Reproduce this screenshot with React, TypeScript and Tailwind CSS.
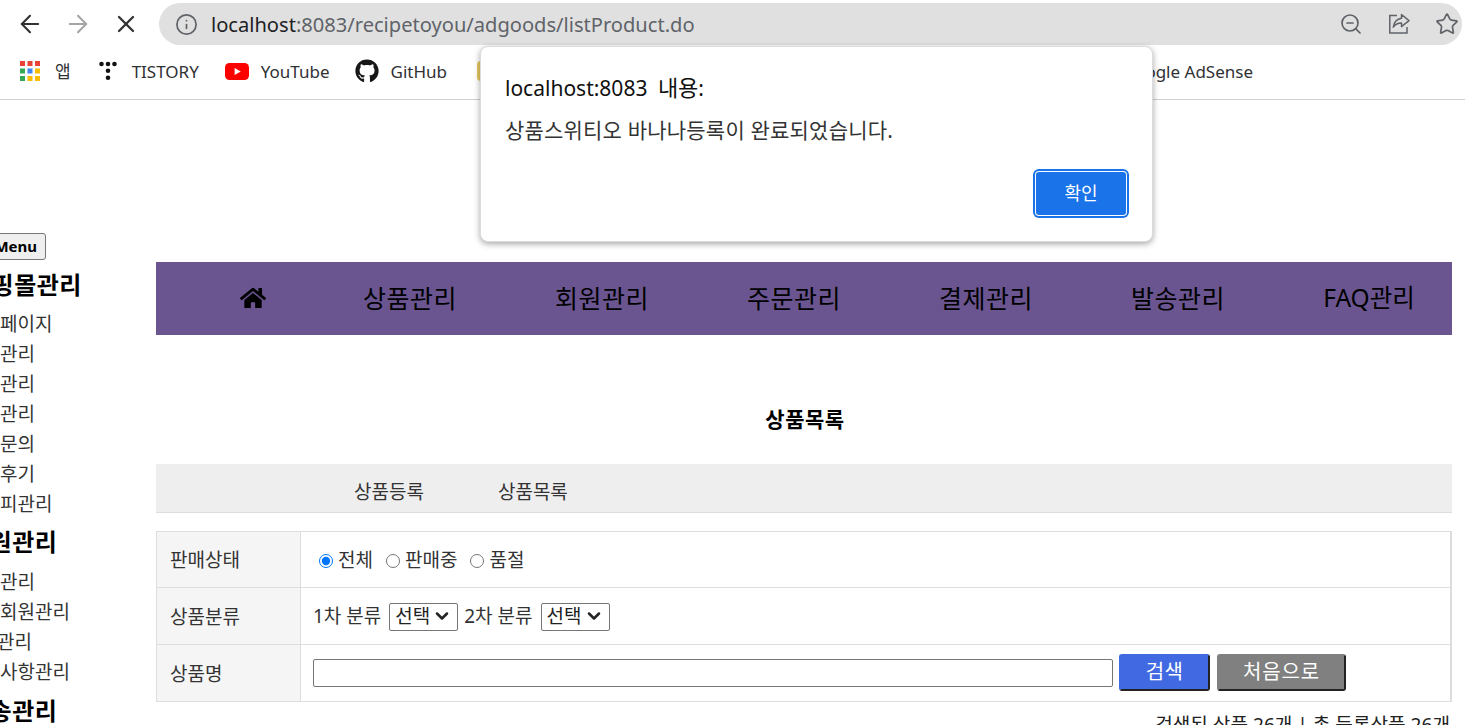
import React from "react";
import { ArrowLeft, ArrowRight, X, Info, ZoomOut, Star, ChevronDown } from "lucide-react";
import { FaHome, FaGithub } from "react-icons/fa";

const kr = "font-['Noto_Sans','Noto_Sans_CJK_KR',sans-serif]";

function AppsIcon() {
  const c = ["#ea4335", "#ea4335", "#ea4335", "#34a853", "#4285f4", "#fbbc04", "#34a853", "#fbbc04", "#fbbc04"];
  return (
    <svg width="20" height="20" viewBox="0 0 20 20">
      {c.map((f, i) => (
        <rect key={i} x={(i % 3) * 7.5} y={Math.floor(i / 3) * 7.5} width="5" height="5" fill={f} />
      ))}
    </svg>
  );
}

function TistoryIcon() {
  return (
    <svg width="18" height="20" viewBox="0 0 18 20" fill="#111">
      <circle cx="2.5" cy="3" r="2.3" /><circle cx="9" cy="3" r="2.3" /><circle cx="15.5" cy="3" r="2.3" />
      <circle cx="9" cy="9.8" r="2.3" /><circle cx="9" cy="16.8" r="2.3" />
    </svg>
  );
}

function YoutubeIcon() {
  return (
    <svg width="24" height="17" viewBox="0 0 24 17">
      <rect width="24" height="17" rx="4.5" fill="#f00" />
      <path d="M9.6 4.9 15.8 8.5 9.6 12.1Z" fill="#fff" />
    </svg>
  );
}

function ShareIcon() {
  return (
    <svg width="24" height="24" viewBox="0 0 24 24" fill="none" stroke="#5f6368" strokeWidth="1.5">
      <path d="M10 3.5H2.8V21H20v-6" />
      <path d="M14.5 2.5 22 8.6l-7.5 6v-3.5c-3.5 0-6 1-8.2 4 .6-4.5 3.2-8 8.2-8.8Z" strokeLinejoin="round" />
    </svg>
  );
}

function Bookmark({ icon, label, cls }: { icon: React.ReactNode; label: string; cls: string }) {
  return (
    <div className={`flex items-center ${cls}`}>
      {icon}
      <span className="text-[17px] leading-none text-[#303134]">{label}</span>
    </div>
  );
}

function BrowserBar() {
  return (
    <header className={`h-[100px] border-b border-[#cfcfcf] ${kr}`}>
      <div className="flex h-[48px] items-center">
        <ArrowLeft size={28} strokeWidth={1.8} className="ml-[16px] text-[#333]" />
        <ArrowRight size={28} strokeWidth={1.8} className="ml-[20px] text-[#a5a5a5]" />
        <X size={28} strokeWidth={2} className="ml-[20px] text-[#333]" />
        <div className="ml-[19px] mr-[3px] flex h-[42px] flex-1 items-center rounded-full bg-[#e0e0e0] pl-[16px] pr-[3px]">
          <Info size={23} strokeWidth={1.8} className="text-[#5f6368]" />
          <span className="ml-[13px] pt-[2px] text-[20.1px] leading-none text-[#5f6368]">
            <span className="text-[#202124]">localhost</span>:8083/recipetoyou/adgoods/listProduct.do
          </span>
          <ZoomOut size={24} strokeWidth={1.7} className="ml-auto text-[#5f6368]" />
          <span className="ml-[24px]"><ShareIcon /></span>
          <Star size={24} strokeWidth={1.7} className="ml-[24px] text-[#5f6368]" />
        </div>
      </div>
      <div className="flex h-[46px] items-center pl-[20px]">
        <Bookmark icon={<AppsIcon />} label="앱" cls="gap-[15px]" />
        <Bookmark icon={<TistoryIcon />} label="TISTORY" cls="ml-[28px] gap-[15px]" />
        <Bookmark icon={<YoutubeIcon />} label="YouTube" cls="ml-[26px] gap-[12px]" />
        <Bookmark icon={<FaGithub size={24} className="text-[#181717]" />} label="GitHub" cls="ml-[25px] gap-[12px]" />
        <div className="ml-[30px] h-[20px] w-[16px] rounded-sm bg-[#e8c95f]" />
        <span className="ml-auto mr-[212px] text-[17px] leading-none text-[#303134]">Google AdSense</span>
      </div>
    </header>
  );
}

function SideGroup({ title, items, offset }: { title: string; items: [string, string][]; offset: string }) {
  return (
    <div>
      <h2 className={`h-[43px] whitespace-nowrap text-[24px] font-bold leading-[38px] tracking-[0.5px] text-black ${offset}`}>{title}</h2>
      <ul>
        {items.map(([t, c]) => (
          <li key={t} className={`h-[30px] whitespace-nowrap text-[19px] leading-[30px] text-[#333] ${c}`}>{t}</li>
        ))}
      </ul>
    </div>
  );
}

function Sidebar() {
  return (
    <aside className="w-[156px] shrink-0 pt-[133px]">
      <button className="-ml-[10px] block h-[27px] w-[56px] rounded-[3px] border border-[#767676] bg-[#efefef] pr-[8px] text-right text-[15px] font-bold text-black">
        Menu
      </button>
      <div className="mt-[6px]">
        <SideGroup
          title="쇼핑몰관리"
          offset="-ml-[31px]"
          items={[
            ["마이페이지", "-ml-[35px]"],
            ["상품관리", "-ml-[35px]"],
            ["주문관리", "-ml-[35px]"],
            ["배송관리", "-ml-[35px]"],
            ["상품문의", "-ml-[35px]"],
            ["상품후기", "-ml-[35px]"],
            ["배송피관리", "-ml-[35px]"],
          ]}
        />
      </div>
      <div className="mt-[4px]">
        <SideGroup
          title="회원관리"
          offset="-ml-[33px] mb-[1px]"
          items={[
            ["회원관리", "-ml-[35px]"],
            ["휴면회원관리", "-ml-[35px]"],
            ["등급관리", "-ml-[38px]"],
            ["공지사항관리", "-ml-[35px]"],
          ]}
        />
      </div>
      <div className="mt-[5px]">
        <SideGroup title="배송관리" offset="-ml-[33px]" items={[]} />
      </div>
    </aside>
  );
}

function TopNav() {
  const items = ["상품관리", "회원관리", "주문관리", "결제관리", "발송관리"];
  return (
    <nav className="flex h-[73px] items-center overflow-hidden bg-[#6a5590] pb-[1px] pl-[84px] text-black">
      <div className="mr-[48px] w-[26px] shrink-0"><FaHome size={26} /></div>
      {items.map((t) => (
        <div key={t} className="w-[192px] shrink-0 whitespace-nowrap text-center text-[25px] leading-none tracking-[0.5px]">{t}</div>
      ))}
      <div className="-ml-[1px] w-[192px] shrink-0 whitespace-nowrap text-center text-[24.5px] leading-none">FAQ관리</div>
    </nav>
  );
}

function Row({ label, children, cls }: { label: string; children: React.ReactNode; cls: string }) {
  return (
    <div className={`flex ${cls}`}>
      <div className="flex w-[144px] shrink-0 items-center border-r border-[#ddd] bg-[#f5f5f5] pl-[13px] pt-[2px] text-[19px] text-[#333]">{label}</div>
      <div className="flex flex-1 items-center pl-[12px] text-[19px] text-[#333]">{children}</div>
    </div>
  );
}

function CatSelect() {
  return (
    <div className="relative h-[28px] w-[69px]">
      <select className="h-full w-full appearance-none rounded-[2px] border border-[#767676] bg-white pl-[5px] text-[19px] leading-none text-[#222]">
        <option>선택</option>
      </select>
      <ChevronDown size={20} strokeWidth={3} className="pointer-events-none absolute right-[6px] top-[4px] text-[#222]" />
    </div>
  );
}

function Radio({ label, checked }: { label: string; checked?: boolean }) {
  return (
    <label className="flex items-center">
      <input type="radio" name="status" defaultChecked={checked} className="ml-[6px] mr-[5px] h-[14px] w-[14px]" />
      {label}
    </label>
  );
}

function Content() {
  return (
    <main className="w-[1296px] shrink-0">
      <div className="h-[162px]" />
      <TopNav />
      <h1 className="mt-[65px] h-[40px] pl-[2px] text-center text-[21px] font-bold leading-[38px] tracking-[0.5px] text-black">상품목록</h1>
      <div className="mt-[24px] flex h-[49px] items-center border-b border-[#ddd] bg-[#eee] pl-[198px] pt-[8px] text-[19px] text-[#333]">
        <span>상품등록</span>
        <span className="ml-[74px]">상품목록</span>
      </div>
      <div className="mt-[18px] border border-r-2 border-[#ddd]">
        <Row label="판매상태" cls="h-[56px] border-b border-[#ddd]">
          <div className="flex items-center gap-[7px] pt-[2px]">
            <Radio label="전체" checked />
            <Radio label="판매중" />
            <Radio label="품절" />
          </div>
        </Row>
        <Row label="상품분류" cls="h-[57px] border-b border-[#ddd]">
          <span className="mr-[8px]">1차 분류</span>
          <CatSelect />
          <span className="ml-[6px] mr-[8px]">2차 분류</span>
          <CatSelect />
        </Row>
        <Row label="상품명" cls="h-[56px]">
          <input className="h-[28px] w-[800px] rounded-[2px] border border-[#767676] bg-white" />
          <button className="-mt-[2px] ml-[6px] h-[37px] w-[91px] rounded-[3px] border-2 border-[#4169e1] border-b-[#222] border-r-[#222] bg-[#4169e1] text-[20px] tracking-[0.3px] text-white">검색</button>
          <button className="-mt-[2px] ml-[7px] h-[37px] w-[129px] rounded-[3px] border-2 border-[#808080] border-b-[#222] border-r-[#222] bg-[#808080] text-[20px] tracking-[0.8px] text-white">처음으로</button>
        </Row>
      </div>
      <p className="mt-[10px] pr-[2px] text-right text-[19.1px] leading-[26px] text-[#222]">검색된 상품 26개 | 총 등록상품 26개</p>
    </main>
  );
}

function AlertDialog() {
  return (
    <div className="absolute left-[480px] top-[46px] h-[196px] w-[673px] rounded-[8px] border border-[#dcdcdc] bg-white pl-[24px] pt-[24px] shadow-[0_2px_6px_rgba(0,0,0,0.35)]">
      <div className="text-[21px] leading-[32px] text-[#111]">localhost:8083 <span className="ml-[5px] text-[22px]">내용</span>:</div>
      <div className="mt-[12px] text-[21px] leading-[28px] tracking-[0.2px] text-[#333]">상품스위티오 바나나등록이 완료되었습니다.</div>
      <button className="absolute left-[555px] top-[125px] h-[43px] w-[90px] rounded-[3px] bg-[#1a73e8] text-[18px] text-white shadow-[0_0_0_1px_#fff,0_0_0_3px_#1a73e8]">
        확인
      </button>
    </div>
  );
}

export default function App() {
  return (
    <div className={`relative h-[725px] w-[1465px] overflow-hidden bg-white ${kr}`}>
      <BrowserBar />
      <div className="flex">
        <Sidebar />
        <Content />
      </div>
      <AlertDialog />
    </div>
  );
}
